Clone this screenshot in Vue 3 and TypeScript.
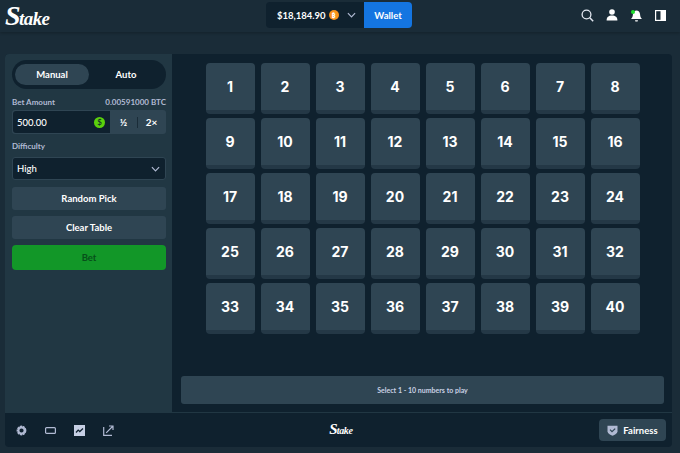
<script setup lang="ts">
const tiles: number[] = Array.from({ length: 40 }, (_, i) => i + 1)
</script>

<template>
  <div class="page">
    <header class="topbar">
      <span class="logo"><span class="cap">S</span>take</span>
      <div class="balance-group">
        <div class="balance">
          <span class="amount">$18,184.90</span>
          <span class="coin">₿</span>
          <svg class="chev" width="9" height="6" viewBox="0 0 10 6"><path d="M1 1l4 4 4-4" fill="none" stroke="#b1bad3" stroke-width="1.300" /></svg>
        </div>
        <button class="wallet">Wallet</button>
      </div>
      <div class="top-icons">
        <svg width="13" height="13" viewBox="0 0 13 13"><circle cx="5.500" cy="5.500" r="4.400" fill="none" stroke="#e4e9f2" stroke-width="1.300" /><path d="M8.800 8.800l3.400 3.400" stroke="#e4e9f2" stroke-width="1.500" /></svg>
        <svg width="12" height="12" viewBox="0 0 12 12"><circle cx="6" cy="3" r="2.800" fill="#fff" /><path d="M0.600 11.500c0-3.600 2-5 5.400-5s5.400 1.400 5.400 5z" fill="#fff" /></svg>
        <svg width="13" height="13" viewBox="0 0 13 13"><path d="M1 10c1.400-1 1.700-2.400 1.900-4.400C3.100 3 4.600 1.600 6.500 1.600S9.900 3 10.100 5.600c.2 2 .5 3.400 1.900 4.400z" fill="#fff" /><path d="M5 11.200h3l-.4 1.300H5.400z" fill="#fff" /><circle cx="3" cy="3" r="2" fill="#1fe030" /></svg>
        <svg width="11" height="11" viewBox="0 0 11 11"><rect width="11" height="11" fill="#fff" /><rect x="1.200" y="1.200" width="4.300" height="8.600" fill="#1a2c38" /></svg>
      </div>
    </header>

    <div class="frame">
      <div class="body">
        <aside class="sidebar">
          <div class="toggle">
            <button class="pill active">Manual</button>
            <button class="pill">Auto</button>
          </div>
          <div class="label-row label-first">
            <span>Bet Amount</span>
            <span>0.00591000 BTC</span>
          </div>
          <div class="amount-row">
            <div class="input">
              <span>500.00</span>
              <span class="dollar">$</span>
            </div>
            <button class="mini">½</button>
            <span class="divider"></span>
            <button class="mini">2×</button>
          </div>
          <div class="label-row label-second"><span>Difficulty</span></div>
          <div class="select">
            <span>High</span>
            <svg width="9" height="6" viewBox="0 0 10 6"><path d="M1 1l4 4 4-4" fill="none" stroke="#b1bad3" stroke-width="1.300" /></svg>
          </div>
          <button class="action first">Random Pick</button>
          <button class="action">Clear Table</button>
          <button class="bet">Bet</button>
        </aside>

        <main class="board">
          <div class="grid">
            <button v-for="n in tiles" :key="n" class="tile">{{ n }}</button>
          </div>
          <div class="notice">Select 1 - 10 numbers to play</div>
        </main>
      </div>

      <footer class="footer">
        <div class="foot-icons">
          <svg width="11" height="11" viewBox="0 0 11 11"><circle cx="5.500" cy="5.500" r="3.900" fill="none" stroke="#b1bad3" stroke-width="2" stroke-dasharray="2.200 0.500" /><circle cx="5.500" cy="5.500" r="3" fill="none" stroke="#b1bad3" stroke-width="1.800" /></svg>
          <svg width="11" height="7" viewBox="0 0 11 7"><rect x="0.600" y="0.600" width="9.800" height="5.800" rx="1" fill="none" stroke="#b1bad3" stroke-width="1.200" /></svg>
          <svg width="11" height="11" viewBox="0 0 11 11"><rect width="11" height="11" fill="#c6cfe4" /><path d="M2 7.500l2.200-2.400 1.600 1.400L9 3.500" fill="none" stroke="#0f212e" stroke-width="1.300" /></svg>
          <svg width="11" height="11" viewBox="0 0 11 11"><path d="M.7 2v8.300H9" fill="none" stroke="#b1bad3" stroke-width="1.200" /><path d="M3.200 7.800L9.500 1.500M6 1h4v4" fill="none" stroke="#b1bad3" stroke-width="1.200" /></svg>
        </div>
        <span class="logo small"><span class="cap">S</span>take</span>
        <button class="fairness">
          <svg width="11" height="11" viewBox="0 0 11 11"><path d="M.5.800h10v5.400c0 2.300-2.700 3.800-5 4.500-2.300-.7-5-2.200-5-4.500z" fill="#b1bad3" /><path d="M3 4.600l2 2 3.200-3" fill="none" stroke="#2f4553" stroke-width="1.300" /></svg>
          <span>Fairness</span>
        </button>
      </footer>
    </div>
  </div>
</template>

<style>
html, body { margin: 0; background: #1a2c38; }
</style>

<style scoped>
.page {
  width: 680px;
  height: 453px;
  display: flex;
  flex-direction: column;
  overflow: hidden;
  background: #1a2c38;
  color: #fff;
  font-family: Lato, "Noto Sans", sans-serif;
  font-weight: 700;
}
button { font-family: inherit; font-weight: inherit; border: 0; color: inherit; padding: 0; }
.topbar {
  height: 32px;
  flex: none;
  box-sizing: border-box;
  padding: 2px 7px 0 5px;
  display: grid;
  grid-template-columns: 1fr auto 1fr;
  align-items: start;
  background: #1a2c38;
  box-shadow: 0 1px 3px rgba(0, 0, 0, .25);
}
.logo {
  font-family: "Liberation Serif", serif;
  font-style: italic;
  font-weight: 700;
  font-size: 19px;
  line-height: 24px;
  letter-spacing: -.6px;
  padding-top: 2px;
  color: #fff;
}
.logo .cap { font-size: 28px; line-height: 24px; letter-spacing: -1.5px; }
.logo.small { font-size: 10px; line-height: 16px; letter-spacing: -.3px; padding-top: 0; justify-self: center; }
.logo.small .cap { font-size: 15px; line-height: 16px; letter-spacing: -1px; }
.balance-group { display: flex; height: 26px; }
.balance {
  width: 98px;
  box-sizing: border-box;
  background: #0f212e;
  border-radius: 4px 0 0 4px;
  display: flex;
  align-items: center;
  padding-left: 11px;
  font-size: 9.500px;
}
.coin {
  width: 10px;
  height: 10px;
  border-radius: 50%;
  background: #f7931a;
  margin-left: 3px;
  font-size: 7px;
  line-height: 10px;
  text-align: center;
}
.chev { margin-left: 8px; }
.wallet {
  width: 48px;
  background: #1475e1;
  border-radius: 0 4px 4px 0;
  font-size: 9.500px;
}
.top-icons {
  justify-self: end;
  height: 26px;
  display: flex;
  align-items: center;
  gap: 12px;
  padding-right: 7px;
}
.frame {
  margin: 22px 8px 6px 5px;
  flex: 1;
  min-height: 0;
  display: flex;
  flex-direction: column;
  border-radius: 4px;
  overflow: hidden;
  background: #0f212e;
}
.body { flex: 1; min-height: 0; display: flex; border-bottom: 1px solid #213743; }
.sidebar {
  width: 167px;
  flex: none;
  box-sizing: border-box;
  background: #213743;
  padding: 6px 6px 0 7px;
  display: flex;
  flex-direction: column;
}
.toggle {
  height: 29px;
  box-sizing: border-box;
  background: #0f212e;
  border-radius: 15px;
  padding: 4px 3px;
  display: flex;
}
.pill {
  flex: 1;
  background: transparent;
  border-radius: 12px;
  font-size: 9.500px;
}
.pill.active { background: #2f4553; }
.label-row {
  display: flex;
  justify-content: space-between;
  color: #b1bad3;
  font-size: 8px;
  line-height: 11px;
}
.label-first { margin-top: 8px; }
.label-second { margin-top: 7px; }
.amount-row {
  margin-top: 2px;
  height: 24px;
  background: #2f4553;
  border-radius: 3px;
  display: flex;
  align-items: center;
  box-sizing: border-box;
  padding: 1px;
}
.input {
  width: 97px;
  height: 22px;
  box-sizing: border-box;
  background: #0f212e;
  border-radius: 3px 0 0 3px;
  display: flex;
  align-items: center;
  justify-content: space-between;
  padding: 0 5px 0 4px;
  font-size: 9.500px;
  font-weight: 500;
}
.dollar {
  width: 11px;
  height: 11px;
  border-radius: 50%;
  background: #5bd10c;
  color: #0f212e;
  font-size: 8px;
  line-height: 11px;
  text-align: center;
}
.mini { flex: 1; height: 22px; background: transparent; font-size: 10px; }
.divider { width: 1px; height: 11px; background: #1a2c38; }
.select {
  margin-top: 5px;
  height: 23px;
  box-sizing: border-box;
  background: #0f212e;
  border: 1px solid #2f4553;
  border-radius: 3px;
  display: flex;
  align-items: center;
  justify-content: space-between;
  padding: 0 5px 0 4px;
  font-size: 9.500px;
  font-weight: 500;
}
.action {
  height: 23px;
  margin-top: 6px;
  background: #2f4553;
  border-radius: 3px;
  font-size: 9.500px;
}
.action.first { margin-top: 7px; }
.bet {
  height: 25px;
  margin-top: 6px;
  background: #129728;
  border-radius: 4px;
  color: #07501a;
  font-size: 9.500px;
}
.board {
  flex: 1;
  min-width: 0;
  display: flex;
  flex-direction: column;
  padding: 9px 8px 8px 9px;
}
.grid {
  display: grid;
  grid-template-columns: repeat(8, 49px);
  grid-auto-rows: 51px;
  gap: 4px 6px;
  justify-content: center;
}
.tile {
  background: #2f4553;
  border-radius: 4px;
  border-bottom: 4px solid #243846;
  font-size: 14px;
  font-family: Inter, Lato, sans-serif;
  font-weight: 700;
}
.notice {
  margin-top: auto;
  height: 28px;
  background: #2f4553;
  border-radius: 3px;
  color: #c9d1e4;
  display: flex;
  align-items: center;
  justify-content: center;
  font-size: 7px;
}
.footer {
  height: 34px;
  flex: none;
  box-sizing: border-box;
  padding: 0 6px 0 11px;
  display: grid;
  grid-template-columns: 1fr auto 1fr;
  align-items: center;
}
.foot-icons { display: flex; align-items: center; gap: 18px; }
.fairness {
  justify-self: end;
  width: 67px;
  height: 22px;
  background: #2f4553;
  border-radius: 4px;
  display: flex;
  align-items: center;
  justify-content: center;
  gap: 5px;
  font-size: 9.500px;
}
</style>
